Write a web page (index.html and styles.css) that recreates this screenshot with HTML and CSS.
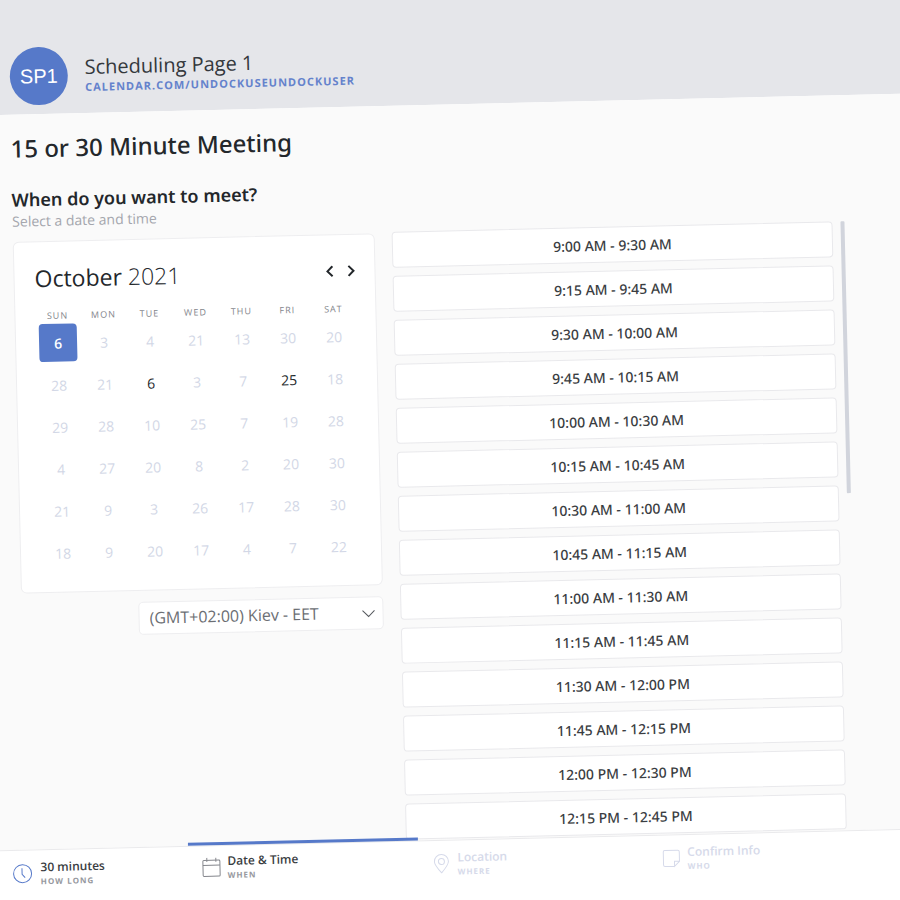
FILE: index.html
```
<!DOCTYPE html>
<html lang="en">
<head>
<meta charset="utf-8">
<title>Scheduling Page 1</title>
<link rel="stylesheet" href="styles.css">
</head>
<body>
<div class="page">
  <header class="header">
    <div class="avatar">SP1</div>
    <div class="owner">
      <div class="owner-name">Scheduling Page 1</div>
      <a class="owner-link" href="#">CALENDAR.COM/UNDOCKUSEUNDOCKUSER</a>
    </div>
  </header>

  <main class="main">
    <h1>15 or 30 Minute Meeting</h1>
    <h2>When do you want to meet?</h2>
    <p class="hint">Select a date and time</p>

    <div class="picker">
      <div class="date-column">
        <section class="calendar">
          <div class="calendar-head">
            <div class="month">October <span class="year">2021</span></div>
            <div class="arrows">
              <button type="button" class="arrow" aria-label="Previous month"><svg width="9" height="12" viewBox="0 0 9 12"><path d="M7 1 2 6l5 5"/></svg></button>
              <button type="button" class="arrow" aria-label="Next month"><svg width="9" height="12" viewBox="0 0 9 12"><path d="m2 1 5 5-5 5"/></svg></button>
            </div>
          </div>
          <table class="days">
            <thead>
              <tr><th>SUN</th><th>MON</th><th>TUE</th><th>WED</th><th>THU</th><th>FRI</th><th>SAT</th></tr>
            </thead>
            <tbody>
              <tr><td><button class="day selected">6</button></td><td><button class="day">3</button></td><td><button class="day">4</button></td><td><button class="day">21</button></td><td><button class="day">13</button></td><td><button class="day">30</button></td><td><button class="day">20</button></td></tr>
              <tr><td><button class="day">28</button></td><td><button class="day">21</button></td><td><button class="day open">6</button></td><td><button class="day">3</button></td><td><button class="day">7</button></td><td><button class="day open">25</button></td><td><button class="day">18</button></td></tr>
              <tr><td><button class="day">29</button></td><td><button class="day">28</button></td><td><button class="day">10</button></td><td><button class="day">25</button></td><td><button class="day">7</button></td><td><button class="day">19</button></td><td><button class="day">28</button></td></tr>
              <tr><td><button class="day">4</button></td><td><button class="day">27</button></td><td><button class="day">20</button></td><td><button class="day">8</button></td><td><button class="day">2</button></td><td><button class="day">20</button></td><td><button class="day">30</button></td></tr>
              <tr><td><button class="day">21</button></td><td><button class="day">9</button></td><td><button class="day">3</button></td><td><button class="day">26</button></td><td><button class="day">17</button></td><td><button class="day">28</button></td><td><button class="day">30</button></td></tr>
              <tr><td><button class="day">18</button></td><td><button class="day">9</button></td><td><button class="day">20</button></td><td><button class="day">17</button></td><td><button class="day">4</button></td><td><button class="day">7</button></td><td><button class="day">22</button></td></tr>
            </tbody>
          </table>
        </section>
        <div class="timezone">
          <select aria-label="Time zone"><option>(GMT+02:00) Kiev - EET</option></select>
          <svg class="caret" width="14" height="9" viewBox="0 0 14 9"><path d="m1 1 6 6 6-6"/></svg>
        </div>
      </div>

      <div class="slots">
        <button class="slot">9:00 AM - 9:30 AM</button>
        <button class="slot">9:15 AM - 9:45 AM</button>
        <button class="slot">9:30 AM - 10:00 AM</button>
        <button class="slot">9:45 AM - 10:15 AM</button>
        <button class="slot">10:00 AM - 10:30 AM</button>
        <button class="slot">10:15 AM - 10:45 AM</button>
        <button class="slot">10:30 AM - 11:00 AM</button>
        <button class="slot">10:45 AM - 11:15 AM</button>
        <button class="slot">11:00 AM - 11:30 AM</button>
        <button class="slot">11:15 AM - 11:45 AM</button>
        <button class="slot">11:30 AM - 12:00 PM</button>
        <button class="slot">11:45 AM - 12:15 PM</button>
        <button class="slot">12:00 PM - 12:30 PM</button>
        <button class="slot">12:15 PM - 12:45 PM</button>
      </div>
      <div class="scroll-thumb"></div>
    </div>
  </main>

  <nav class="steps">
    <a class="step done" href="#">
      <svg class="icon" width="20" height="20" viewBox="0 0 20 20"><circle cx="10" cy="10" r="9"/><path d="M9.500 4.500v6l3 3.500"/></svg>
      <span class="step-text"><span class="step-title">30 minutes</span><span class="step-sub">HOW LONG</span></span>
    </a>
    <a class="step active" href="#">
      <svg class="icon" width="20" height="20" viewBox="0 0 20 20"><rect x="1.500" y="3" width="17" height="16" rx="1"/><path d="M1.500 8h17M5.500 .5v4M14.500 .5v4"/></svg>
      <span class="step-text"><span class="step-title">Date &amp; Time</span><span class="step-sub">WHEN</span></span>
    </a>
    <a class="step" href="#">
      <svg class="icon" width="20" height="20" viewBox="0 0 20 20"><path d="M10 19C6 14.500 3 11 3 7.700a7 7 0 0 1 14 0C17 11 14 14.500 10 19Z"/><circle cx="10" cy="7.700" r="3"/></svg>
      <span class="step-text"><span class="step-title">Location</span><span class="step-sub">WHERE</span></span>
    </a>
    <a class="step" href="#">
      <svg class="icon" width="20" height="20" viewBox="0 0 20 20"><path d="M13 18H3.500A1.500 1.500 0 0 1 2 16.500v-13A1.500 1.500 0 0 1 3.500 2h13A1.500 1.500 0 0 1 18 3.500V13l-5 5v-5h5"/></svg>
      <span class="step-text"><span class="step-title">Confirm Info</span><span class="step-sub">WHO</span></span>
    </a>
  </nav>
</div>
</body>
</html>
```
FILE: styles.css
```
* {
  box-sizing: border-box;
}

body {
  margin: 0;
  overflow: hidden;
  background: #fff;
  color: #23272b;
  font-family: "Open Sans", "Noto Sans", sans-serif;
}

button,
select {
  font-family: inherit;
}

svg {
  display: block;
  fill: none;
  stroke: currentColor;
}

/* The whole page is tilted; it bleeds past the window on the left and below. */
.page {
  display: flex;
  flex-direction: column;
  min-height: calc(100vh + 24px);
  margin-left: -24px;
  transform: rotate(-1.35deg);
  transform-origin: 24px 0;
}

.header {
  display: flex;
  align-items: flex-end;
  gap: 17px;
  padding: 48px 32px 9px;
  background: #e5e6ea;
}

.avatar {
  width: 58px;
  height: 58px;
  border-radius: 50%;
  background: #5679c9;
  color: #fff;
  font: 20px/58px "Liberation Sans", sans-serif;
  text-align: center;
}

.owner {
  padding-bottom: 9px;
}

.owner-name {
  color: #34383c;
  font-size: 20px;
  line-height: 24px;
}

.owner-link {
  display: block;
  color: #6482cc;
  font-size: 11px;
  font-weight: 700;
  line-height: 16px;
  letter-spacing: 1px;
  text-decoration: none;
}

.main {
  padding: 18px 61px 0 31px;
  background: #fafafa;
}

h1,
h2,
.slot {
  font-family: "Noto Sans", "Open Sans", sans-serif;
}

h1 {
  margin: 0;
  font-size: 24px;
  font-weight: 500;
  line-height: 32px;
}

h2 {
  margin: 23px 0 0;
  font-size: 18px;
  font-weight: 600;
  line-height: 24px;
}

.hint {
  margin: 0;
  color: #a4a6ad;
  font-size: 14px;
  line-height: 20px;
}

.picker {
  display: grid;
  grid-template-columns: 362px minmax(0, 1fr) 4px;
  align-items: start;
  padding: 9px 0 1px;
}

.date-column {
  padding-top: 1px;
}

.calendar {
  padding: 20px 19px 18px;
  border: 1px solid #eeeef0;
  border-radius: 6px;
  background: #fff;
}

.calendar-head {
  display: flex;
  justify-content: space-between;
  align-items: center;
  height: 32px;
  padding-left: 1px;
}

.month {
  font-size: 23px;
}

.year {
  font-weight: 300;
}

.arrows {
  display: flex;
  gap: 12px;
}

.arrow {
  padding: 0;
  border: 0;
  background: none;
  color: #23272b;
  stroke-width: 2;
}

.days {
  width: 100%;
  margin-top: 15px;
  border-collapse: collapse;
  table-layout: fixed;
}

.days th {
  height: 13px;
  padding: 0;
  color: #84868c;
  font-size: 9px;
  font-weight: 500;
  line-height: 13px;
  letter-spacing: 1px;
}

.days td {
  height: 42px;
  padding: 0;
  text-align: center;
}

.day {
  width: 38px;
  height: 38px;
  padding: 0;
  border: 0;
  border-radius: 4px;
  background: none;
  color: #d2d7e6;
  font-size: 14px;
}

.day.open {
  color: #23272b;
}

.day.selected {
  background: #5679c9;
  color: #fff;
  font-weight: 600;
}

.timezone {
  position: relative;
  width: 245px;
  margin: 11px 0 0 auto;
}

.timezone select {
  display: block;
  width: 100%;
  height: 33px;
  padding: 0 32px 2px 10px;
  border: 1px solid #eeeef0;
  border-radius: 5px;
  background: #fff;
  color: #6b6e73;
  font-size: 16px;
  appearance: none;
}

.caret {
  position: absolute;
  top: 13px;
  right: 8px;
  color: #55585d;
  pointer-events: none;
}

.slots {
  display: grid;
  gap: 8px;
  padding: 0 8px 0 17px;
}

.slot {
  height: 36px;
  border: 1px solid #e9e9ec;
  border-radius: 4px;
  background: #fff;
  color: #3a3d42;
  font-size: 14px;
  font-weight: 500;
}

.scroll-thumb {
  height: 272px;
  border-radius: 1px;
  background: #d1d4dc;
}

.steps {
  display: grid;
  flex: 1;
  grid-template-columns: 192px repeat(3, 230px);
  align-items: start;
  border-top: 1px solid #eaeaec;
  background: #fff;
}

.step {
  position: relative;
  display: flex;
  align-items: center;
  gap: 6px;
  padding: 9px 13px;
  color: #d6daea;
  text-decoration: none;
}

.step-title,
.step-sub {
  display: block;
}

.step-title {
  font-size: 12px;
  font-weight: 600;
  line-height: 16px;
}

.step-sub {
  font-size: 8px;
  font-weight: 700;
  line-height: 12px;
  letter-spacing: 1px;
}

.done,
.active {
  color: #3a3d42;
}

.done {
  gap: 8px;
  padding-left: 16px;
}

.done .step-sub,
.active .step-sub {
  color: #96989e;
}

.done .icon {
  color: #5679c9;
}

.active .icon {
  color: #84868c;
}

.active {
  padding-top: 7px;
}

.active::before {
  position: absolute;
  top: -4px;
  right: 0;
  left: 0;
  height: 3px;
  background: #5679c9;
  content: "";
}
```
